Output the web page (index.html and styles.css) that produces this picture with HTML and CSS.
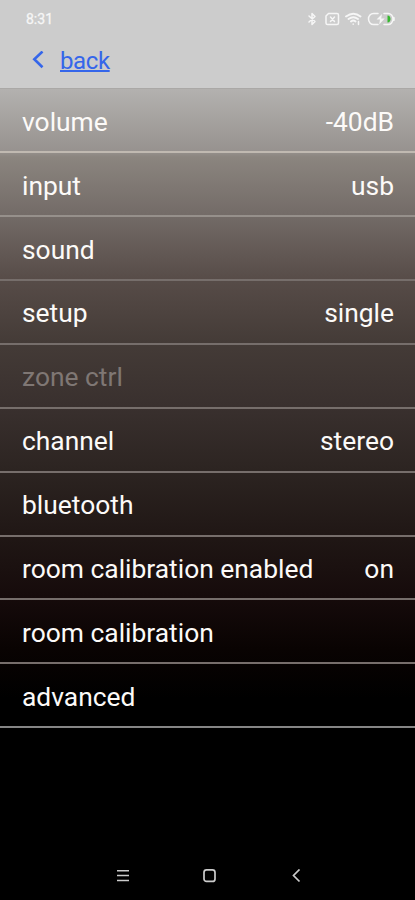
FILE: index.html
```html
<!DOCTYPE html>
<html lang="en">
<head>
<meta charset="utf-8">
<meta name="viewport" content="width=device-width, initial-scale=1">
<title>Settings</title>
<link rel="stylesheet" href="styles.css">
</head>
<body>
<div class="screen">
  <header class="top">
    <div class="status">
      <span class="time">8:31</span>
      <svg class="status-icons" width="90" height="16" viewBox="0 0 90 16" fill="none" stroke="#f6f6f6" stroke-width="1.5" stroke-linecap="round" stroke-linejoin="round">
        <path d="M4 5l6 5.500-3 3V2.500l3 3L4 11"/>
        <path d="M23.500 2.500h8.500q1.500 0 1.500 1.500v8q0 1.500-1.500 1.500h-9.500q-1.500 0-1.500-1.500V5z"/>
        <path d="M25.500 6l4 4.500M29.500 6l-4 4.500"/>
        <path d="M41 5.500q7.500-5.500 14.500 0M43.500 8q4.800-3.500 9.500 0M46 10.500q2.300-1.800 4.500 0" stroke-width="1.900"/>
        <path d="M48.200 13v.3M53.500 10.500v3"/>
        <path d="M73 2.500h-4.500a5 5.500 0 0 0 0 11H73M79 2.500h4a5 5.500 0 0 1 0 11h-4M89 6.800v2.400"/>
        <path d="M77 3l-5.500 5.500h3.500l-.8 5 5.500-6h-3.500z" fill="#f6f6f6" stroke="none"/>
        <path d="M82.500 4.500c4 0 4 7 0 7z" fill="#36b82e" stroke="none"/>
      </svg>
    </div>
    <a class="back" href="#">
      <svg width="12" height="18" viewBox="0 0 12 18" fill="none" stroke="#3566ea" stroke-width="2.600"><path d="M10.500 .5L2.300 8.300l8.200 8"/></svg>
      <span class="back-label">back</span>
    </a>
  </header>
  <main class="list">
    <div class="row"><span>volume</span><span>-40dB</span></div>
    <div class="row"><span>input</span><span>usb</span></div>
    <div class="row"><span>sound</span></div>
    <div class="row"><span>setup</span><span>single</span></div>
    <div class="row disabled"><span>zone ctrl</span></div>
    <div class="row"><span>channel</span><span>stereo</span></div>
    <div class="row"><span>bluetooth</span></div>
    <div class="row"><span>room calibration enabled</span><span>on</span></div>
    <div class="row"><span>room calibration</span></div>
    <div class="row"><span>advanced</span></div>
  </main>
  <nav class="nav">
    <svg width="14" height="14" viewBox="0 0 14 14" fill="none" stroke="#ccc" stroke-width="1.500"><path d="M1 1.700h12M1 6.500h12M1 11.500h12"/></svg>
    <svg width="14" height="14" viewBox="0 0 14 14" fill="none" stroke="#ccc" stroke-width="1.700"><rect x="1" y=".9" width="11" height="11.500" rx="2.500"/></svg>
    <svg width="14" height="14" viewBox="0 0 14 14" fill="none" stroke="#ccc" stroke-width="1.700"><path d="M9.500 .5L3.500 6.500l6 6"/></svg>
  </nav>
</div>
</body>
</html>
```
FILE: styles.css
```css
body {
  margin: 0;
  background: #000;
  font-family: Roboto, sans-serif;
}
.screen {
  display: flex;
  flex-direction: column;
  height: 900px;
  overflow: hidden;
}
.top {
  box-sizing: border-box;
  height: 89px;
  background: #ccc;
  border-bottom: 1px solid #aaa8a6;
}
.status {
  display: flex;
  justify-content: space-between;
  align-items: center;
  height: 38px;
  padding: 0 20px 0 26px;
}
.time {
  font-size: 14px;
  color: #f6f6f6;
  -webkit-text-stroke: 0.3px #f6f6f6;
}
.back {
  display: flex;
  align-items: center;
  gap: 16px;
  width: max-content;
  height: 44px;
  padding-left: 32px;
  color: #3566ea;
  text-decoration: none;
}
.back-label {
  font-size: 24px;
  letter-spacing: -0.4px;
  line-height: 28px;
  padding-top: 1px;
  text-decoration: underline;
  text-decoration-thickness: 1.5px;
  text-underline-offset: 1px;
  text-decoration-skip-ink: none;
}
.list {
  flex: 1;
  color: #fcfaf8;
  background: linear-gradient(#b3b1af 0, #97928f 62px, #8b857f 68px, #736b67 126px, #574c48 190px, #443b37 254px, #39302e 318px, #2c2421 382px, #201715 446px, #160b0b 508px, #090302 560px, #000 610px);
}
.row {
  display: flex;
  justify-content: space-between;
  align-items: center;
  box-sizing: border-box;
  height: 63.9px;
  padding: 3px 21px 0 22px;
  border-bottom: 2px solid #766e6b;
  font-size: 26.4px;
  line-height: 30px;
}
.row:first-child {
  height: 64.2px;
  border-color: #c0b9b1;
}
.row:nth-child(2) {
  border-color: #96908b;
}
.row:last-child {
  border-color: #858585;
}
.disabled > span {
  color: #7f7774;
}
.nav {
  display: flex;
  justify-content: space-between;
  align-items: center;
  height: 49px;
  padding: 0 111px 0 116px;
  background: #000;
}
```
